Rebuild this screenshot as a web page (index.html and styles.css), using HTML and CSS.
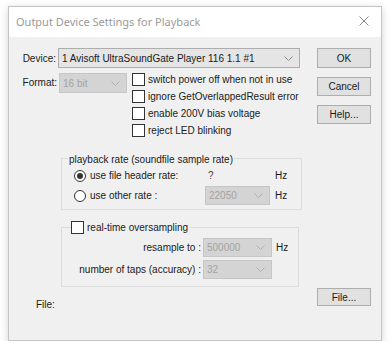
FILE: index.html
```html
<!DOCTYPE html>
<html>
<head>
<meta charset="utf-8">
<link rel="stylesheet" href="styles.css">
</head>
<body>
<div class="dialog">
  <div class="titlebar">
    <span class="title">Output Device Settings for Playback</span>
    <svg class="close" width="10" height="10" viewBox="0 0 10 10"><path d="M0.5 0.5L9.5 9.5M9.5 0.5L0.5 9.5" stroke="#8a8a8a" stroke-width="1"/></svg>
  </div>
  <div class="content">
    <div class="leftcol">
      <div class="row-device">
        <span class="lbl lbl-device">Device:</span>
        <div class="combo combo-device"><span class="combo-text">1 Avisoft UltraSoundGate Player 116 1.1 #1</span><svg class="chev" width="9" height="5" viewBox="0 0 9 5"><path d="M0.5 0.5L4.5 4.5L8.5 0.5" fill="none" stroke="#8c8c8c" stroke-width="1"/></svg></div>
      </div>
      <div class="row-format">
        <span class="lbl lbl-format">Format:</span>
        <div class="combo combo-format disabled"><span class="combo-text">16 bit</span><svg class="chev" width="9" height="5" viewBox="0 0 9 5"><path d="M0.5 0.5L4.5 4.5L8.5 0.5" fill="none" stroke="#b0b0b0" stroke-width="1"/></svg></div>
        <div class="checks">
          <div class="check-row"><span class="box"></span><span>switch power off when not in use</span></div>
          <div class="check-row"><span class="box"></span><span>ignore GetOverlappedResult error</span></div>
          <div class="check-row"><span class="box"></span><span>enable 200V bias voltage</span></div>
          <div class="check-row"><span class="box"></span><span>reject LED blinking</span></div>
        </div>
      </div>
      <div class="group group-rate">
        <div class="group-title"><span>playback rate (soundfile sample rate)</span></div>
        <div class="rate-grid">
          <div class="radio-cell"><span class="radio checked"></span><span>use file header rate:</span></div>
          <div class="value-cell">?</div>
          <div class="hz">Hz</div>
          <div class="radio-cell"><span class="radio"></span><span>use other rate :</span></div>
          <div class="combo combo-rate disabled"><span class="combo-text">22050</span><svg class="chev" width="9" height="5" viewBox="0 0 9 5"><path d="M0.5 0.5L4.5 4.5L8.5 0.5" fill="none" stroke="#b0b0b0" stroke-width="1"/></svg></div>
          <div class="hz">Hz</div>
        </div>
      </div>
      <div class="group group-over">
        <div class="group-title over-title"><span class="box"></span><span>real-time oversampling</span></div>
        <div class="over-grid">
          <div class="over-lbl">resample to :</div>
          <div class="combo combo-over disabled"><span class="combo-text">500000</span><svg class="chev" width="9" height="5" viewBox="0 0 9 5"><path d="M0.5 0.5L4.5 4.5L8.5 0.5" fill="none" stroke="#b0b0b0" stroke-width="1"/></svg></div>
          <div class="hz">Hz</div>
          <div class="over-lbl">number of taps (accuracy) :</div>
          <div class="combo combo-over disabled"><span class="combo-text">32</span><svg class="chev" width="9" height="5" viewBox="0 0 9 5"><path d="M0.5 0.5L4.5 4.5L8.5 0.5" fill="none" stroke="#b0b0b0" stroke-width="1"/></svg></div>
          <div></div>
        </div>
      </div>
      <div class="file-lbl">File:</div>
    </div>
    <div class="rightcol">
      <div class="btn btn-ok">OK</div>
      <div class="btn">Cancel</div>
      <div class="btn">Help...</div>
      <div class="btn btn-file">File...</div>
    </div>
  </div>
</div>
</body>
</html>
```
FILE: styles.css
```css
html, body {
  margin: 0;
  padding: 0;
  background: #ffffff;
}
body {
  padding: 6px 0 0 8px;
  font-family: "Liberation Sans", Arial, sans-serif;
  font-size: 10px;
  color: #1a1a1a;
  white-space: nowrap;
}
.dialog {
  width: 372px;
  height: 333px;
  border: 1px solid #c4c4c4;
  box-shadow: 0 2px 8px rgba(0,0,0,0.18);
  display: flex;
  flex-direction: column;
  background: #f0f0f0;
}
.titlebar {
  height: 30px;
  background: #ffffff;
  display: flex;
  align-items: center;
  justify-content: space-between;
  padding: 0 12px 0 7px;
  flex: none;
}
.title {
  font-family: "Noto Sans", "Open Sans", sans-serif;
  font-size: 11px;
  color: #9a9a9a;
  margin-top: -1px;
}
.close {
  margin-top: -2px;
}
.content {
  flex: 1;
  display: flex;
  align-items: flex-start;
}
.leftcol {
  width: 293px;
  padding-top: 11px;
  display: flex;
  flex-direction: column;
}
.row-device {
  display: flex;
  align-items: center;
  height: 20px;
}
.lbl {
  text-align: right;
  flex: none;
}
.lbl-device {
  width: 47px;
  margin-right: 2px;
}
.combo {
  display: flex;
  align-items: center;
  justify-content: space-between;
  box-sizing: border-box;
  border: 1px solid #adadad;
  background: #e5e5e5;
  padding: 0 6px 0 3px;
  height: 20px;
  flex: none;
}
.combo.disabled {
  background: #d4d4d4;
  border-color: #c6c6c6;
  color: #a3a3a3;
}
.combo-device {
  width: 242px;
}
.row-format {
  display: flex;
  align-items: flex-start;
  margin-top: 5px;
}
.lbl-format {
  width: 48px;
  margin-right: 2px;
  line-height: 20px;
  height: 20px;
}
.combo-format {
  width: 68px;
}
.checks {
  margin-left: 5px;
  margin-top: -2px;
  display: flex;
  flex-direction: column;
}
.check-row {
  display: flex;
  align-items: center;
  height: 17px;
}
.box {
  display: inline-block;
  box-sizing: border-box;
  width: 13px;
  height: 13px;
  border: 1px solid #333333;
  background: #ffffff;
  margin-right: 3px;
  flex: none;
}
.group {
  margin-left: 52px;
  border: 1px solid #dcdcdc;
  box-sizing: border-box;
}
.group-title {
  display: flex;
  align-items: center;
  width: fit-content;
  height: 14px;
  margin-top: -7px;
  background: #f0f0f0;
}
.group-rate {
  width: 241px;
  height: 52px;
  margin-top: 19px;
}
.group-rate .group-title {
  margin-left: 6px;
  padding: 0 1px;
}
.rate-grid {
  display: grid;
  grid-template-columns: 131px 65px auto;
  grid-template-rows: 17px 19px;
  column-gap: 0;
  row-gap: 2px;
  align-items: center;
  margin-left: 12px;
  margin-top: 1px;
}
.rate-grid .hz {
  padding-left: 5px;
}
.radio-cell {
  display: flex;
  align-items: center;
}
.radio {
  box-sizing: border-box;
  width: 12px;
  height: 12px;
  border: 1px solid #333333;
  border-radius: 50%;
  background: #ffffff;
  margin-right: 4px;
  flex: none;
  display: flex;
  align-items: center;
  justify-content: center;
}
.radio.checked::after {
  content: "";
  width: 6px;
  height: 6px;
  border-radius: 50%;
  background: #333333;
}
.value-cell {
  padding-left: 3px;
  color: #444;
}
.combo-rate {
  width: 65px;
  height: 19px;
}
.group-over {
  width: 238px;
  height: 60px;
  margin-top: 17px;
}
.over-title {
  margin-left: 9px;
  padding-right: 2px;
  margin-top: -8px;
  height: 15px;
}
.over-title .box {
  margin-right: 3px;
}
.over-grid {
  display: grid;
  grid-template-columns: 141px 69px auto;
  grid-template-rows: 19px 19px;
  column-gap: 0;
  row-gap: 3px;
  align-items: center;
  margin-top: 3px;
}
.over-lbl {
  text-align: right;
  padding-right: 2px;
}
.combo-over {
  width: 69px;
  height: 19px;
}
.over-grid .hz {
  padding-left: 4px;
}
.file-lbl {
  margin-left: 27px;
  margin-top: 12px;
}
.rightcol {
  margin-left: 15px;
  padding-top: 11px;
  display: flex;
  flex-direction: column;
  width: 54px;
}
.btn {
  box-sizing: border-box;
  height: 19px;
  border: 1px solid #adadad;
  background: #e1e1e1;
  display: flex;
  align-items: center;
  justify-content: center;
  margin-bottom: 9px;
}
.btn-ok {
  height: 20px;
}
.btn-file {
  margin-top: 155px;
  height: 18px;
}
```
